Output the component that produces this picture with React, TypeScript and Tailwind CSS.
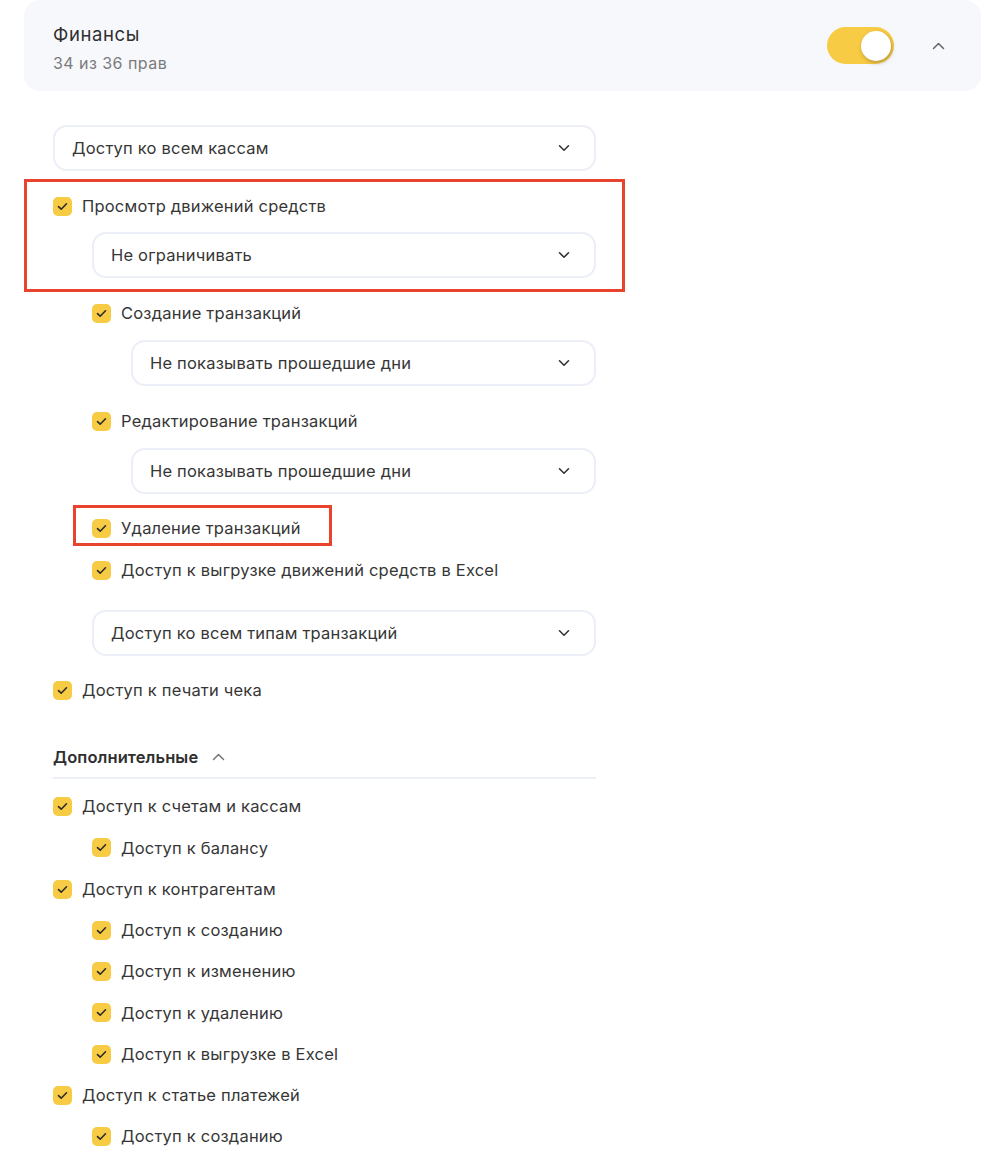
import React from "react";

const Check = () => (
  <span className="flex h-[19px] w-[19px] shrink-0 items-center justify-center rounded-[5px] bg-[#f8cb45]">
    <svg width="11" height="9" viewBox="0 0 11 9" fill="none">
      <path d="M1.5 4.6L4.2 7.2L9.5 1.8" stroke="#2b2b2b" strokeWidth="1.6" strokeLinecap="round" strokeLinejoin="round" />
    </svg>
  </span>
);

const ChevronDown = () => (
  <svg width="12" height="8" viewBox="0 0 12 8" fill="none">
    <path d="M1.5 1.8L6 6.2L10.5 1.8" stroke="#333" strokeWidth="1.6" strokeLinecap="round" strokeLinejoin="round" />
  </svg>
);

const ChevronUp = ({ color = "#666" }: { color?: string }) => (
  <svg width="13" height="8" viewBox="0 0 13 8" fill="none">
    <path d="M1.5 6.5L6.5 1.5L11.5 6.5" stroke={color} strokeWidth="1.5" strokeLinecap="round" strokeLinejoin="round" />
  </svg>
);

const Row = ({ label, indent = false, className = "" }: { label: string; indent?: boolean; className?: string }) => (
  <div className={`flex h-6 items-center gap-[10px] ${indent ? "pl-[39px]" : ""} ${className}`}>
    <Check />
    <span className="text-[16.5px] tracking-[0.2px] text-[#363636]">{label}</span>
  </div>
);

const Select = ({ label, className = "" }: { label: string; className?: string }) => (
  <div className={`flex h-[46px] items-center justify-between rounded-[14px] border-2 border-[#eceef8] bg-white pl-[17px] pr-[24px] ${className}`}>
    <span className="text-[16.5px] tracking-[0.2px] text-[#363636]">{label}</span>
    <ChevronDown />
  </div>
);

export default function App() {
  return (
    <div className="min-h-[1163px] bg-white px-[24px] pr-[19px]" style={{ fontFamily: "Inter, 'Noto Sans', sans-serif" }}>
      <div className="flex h-[91px] items-center justify-between rounded-[16px] bg-[#f7f8fc] pl-[29px] pr-[36px]">
        <div className="flex flex-col pt-[4px]">
          <span className="text-[18.5px] leading-[22px] tracking-[0.6px] text-[#2f2f2f]">Финансы</span>
          <span className="mt-[8px] text-[16px] leading-[20px] tracking-[0.45px] text-[#7b7b7b]">34 из 36 прав</span>
        </div>
        <div className="flex items-center gap-[38px]">
          <div className="relative h-[37px] w-[67px] rounded-full bg-[#f8cb45]">
            <div className="absolute right-[3px] top-[3.5px] h-[30px] w-[30px] rounded-full bg-white shadow-[1px_2px_4px_rgba(0,0,0,0.25)]" />
          </div>
          <ChevronUp />
        </div>
      </div>

      <div className="ml-[29px] w-[543px] pt-[34px]">
        <Select label="Доступ ко всем кассам" />

        <div className="relative pt-[23px]">
          <div className="pointer-events-none absolute -left-[29px] -right-[29px] top-[8px] h-[113px] border-[3px] border-[#e8432c]" />
          <Row label="Просмотр движений средств" />
          <Select label="Не ограничивать" className="ml-[39px] mt-[14px]" />
        </div>

        <Row label="Создание транзакций" indent className="mt-[23px]" />
        <Select label="Не показывать прошедшие дни" className="ml-[78px] mt-[15px]" />

        <Row label="Редактирование транзакций" indent className="mt-[23px]" />
        <Select label="Не показывать прошедшие дни" className="ml-[78px] mt-[15px]" />

        <div className="relative mt-[22px]">
          <div className="pointer-events-none absolute left-[20px] top-[-11px] h-[41px] w-[259px] border-[3px] border-[#e8432c]" />
          <Row label="Удаление транзакций" indent />
        </div>
        <Row label="Доступ к выгрузке движений средств в Excel" indent className="mt-[18px]" />
        <Select label="Доступ ко всем типам транзакций" className="ml-[39px] mt-[28px]" />

        <Row label="Доступ к печати чека" className="mt-[22px]" />

        <div className="mt-[43px] flex h-6 items-center gap-[14px]">
          <span className="text-[16.5px] font-semibold tracking-[0.1px] text-[#2f2f2f]">Дополнительные</span>
          <ChevronUp color="#777" />
        </div>
        <div className="mt-[8px] h-[2px] bg-[#eceef8]" />

        <div className="mt-[7px] flex flex-col">
          {[
            ["Доступ к счетам и кассам", false],
            ["Доступ к балансу", true],
            ["Доступ к контрагентам", false],
            ["Доступ к созданию", true],
            ["Доступ к изменению", true],
            ["Доступ к удалению", true],
            ["Доступ к выгрузке в Excel", true],
            ["Доступ к статье платежей", false],
            ["Доступ к созданию", true],
          ].map(([label, indent], i) => (
            <div key={i} className="flex h-[41.25px] items-center">
              <Row label={label as string} indent={indent as boolean} />
            </div>
          ))}
        </div>
      </div>
    </div>
  );
}
